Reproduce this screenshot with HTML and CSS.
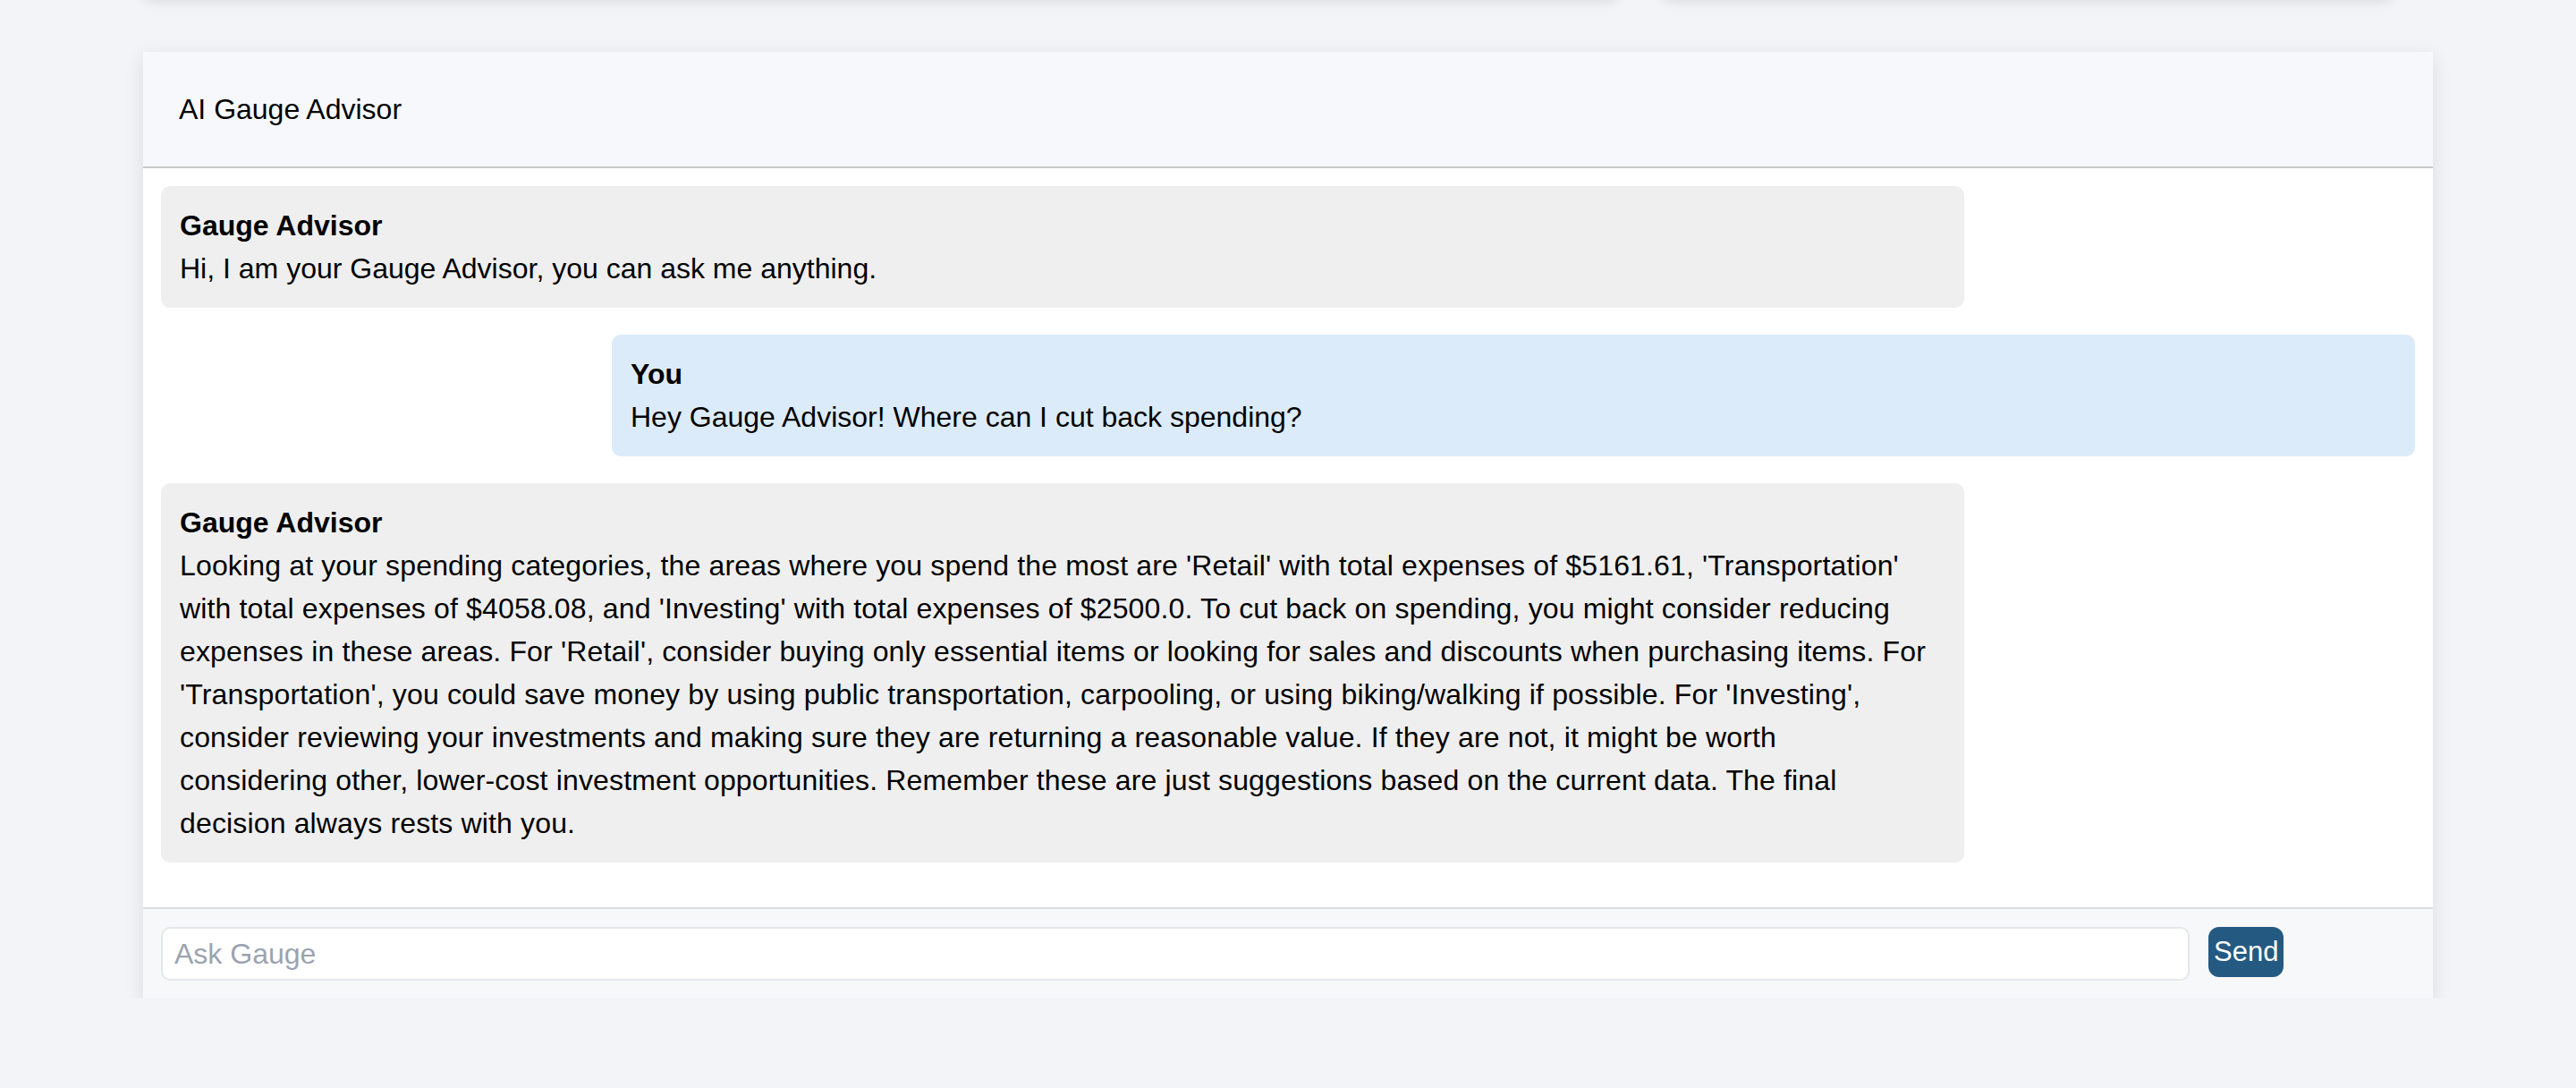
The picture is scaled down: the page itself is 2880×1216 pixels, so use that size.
FILE: index.html
```html
<!DOCTYPE html>
<html lang="en">
<head>
<meta charset="utf-8">
<title>AI Gauge Advisor</title>
<link rel="stylesheet" href="styles.css">
</head>
<body>
<div class="page">
  <div class="top-cards">
    <div class="card card-wide"></div>
    <div class="card card-narrow"></div>
  </div>
  <section class="chat">
    <header class="chat-header">AI Gauge Advisor</header>
    <div class="messages">
      <div class="msg msg-bot">
        <div class="msg-name">Gauge Advisor</div>
        <div class="msg-text">Hi, I am your Gauge Advisor, you can ask me anything.</div>
      </div>
      <div class="msg msg-user">
        <div class="msg-name">You</div>
        <div class="msg-text">Hey Gauge Advisor! Where can I cut back spending?</div>
      </div>
      <div class="msg msg-bot">
        <div class="msg-name">Gauge Advisor</div>
        <div class="msg-text msg-long">Looking at your spending categories, the areas where you spend the most are 'Retail' with total expenses of $5161.61, 'Transportation'<br>with total expenses of $4058.08, and 'Investing' with total expenses of $2500.0. To cut back on spending, you might consider reducing<br>expenses in these areas. For 'Retail', consider buying only essential items or looking for sales and discounts when purchasing items. For<br>'Transportation', you could save money by using public transportation, carpooling, or using biking/walking if possible. For 'Investing',<br>consider reviewing your investments and making sure they are returning a reasonable value. If they are not, it might be worth<br>considering other, lower-cost investment opportunities. Remember these are just suggestions based on the current data. The final<br>decision always rests with you.</div>
      </div>
    </div>
    <form class="composer">
      <input class="composer-input" type="text" placeholder="Ask Gauge">
      <button class="composer-send" type="button">Send</button>
    </form>
  </section>
</div>
</body>
</html>
```

FILE: styles.css
```css
html, body {
  margin: 0;
  padding: 0;
}

body {
  background: #f3f4f8;
  font-family: "Liberation Sans", Arial, Helvetica, sans-serif;
  color: #000;
  overflow: hidden;
}

.page {
  padding: 0 160px;
}

.top-cards {
  display: grid;
  grid-template-columns: 1649px 815px;
  column-gap: 50px;
  margin-top: -102px;
}

.card {
  height: 100px;
  background: #ffffff;
  border-radius: 8px;
  box-shadow: 0 4px 14px rgba(0, 0, 0, 0.10);
}

.chat {
  margin-top: 60px;
  background: #ffffff;
  box-shadow: 0 6px 20px rgba(0, 0, 0, 0.10);
}

.chat-header {
  height: 128px;
  display: flex;
  align-items: center;
  padding: 0 40px;
  background: #f7f8fc;
  border-bottom: 2px solid #c8c8c8;
  font-size: 32px;
  line-height: 48px;
}

.messages {
  padding: 20px 20px;
  display: flex;
  flex-direction: column;
  background: #ffffff;
}

.msg {
  width: 80%;
  box-sizing: border-box;
  padding: 20px 21px;
  margin-bottom: 30px;
  border-radius: 10px;
  font-size: 32px;
  line-height: 48px;
}

.msg-long {
  letter-spacing: 0.15px;
}

.msg-bot {
  background: #efefef;
  align-self: flex-start;
}

.msg-user {
  background: #dcebf9;
  align-self: flex-end;
}

.msg-name {
  font-weight: 700;
}

.composer {
  margin: 0;
  display: flex;
  align-items: flex-start;
  padding: 20px;
  background: #f7f8fa;
  border-top: 2px solid #dedede;
}

.composer-input {
  width: 90%;
  height: 60px;
  box-sizing: border-box;
  padding: 0 13px;
  border: 2px solid #e5e7eb;
  border-radius: 10px;
  background: #ffffff;
  font-family: "Liberation Sans", Arial, Helvetica, sans-serif;
  font-size: 32px;
  color: #000;
  outline: none;
}

.composer-input::placeholder {
  color: #9ca3af;
}

.composer-send {
  margin-left: 21px;
  height: 56px;
  padding: 0 6px;
  border: none;
  border-radius: 12px;
  background: #245a82;
  color: #ffffff;
  font-family: "Liberation Sans", Arial, Helvetica, sans-serif;
  font-size: 31px;
}
```
